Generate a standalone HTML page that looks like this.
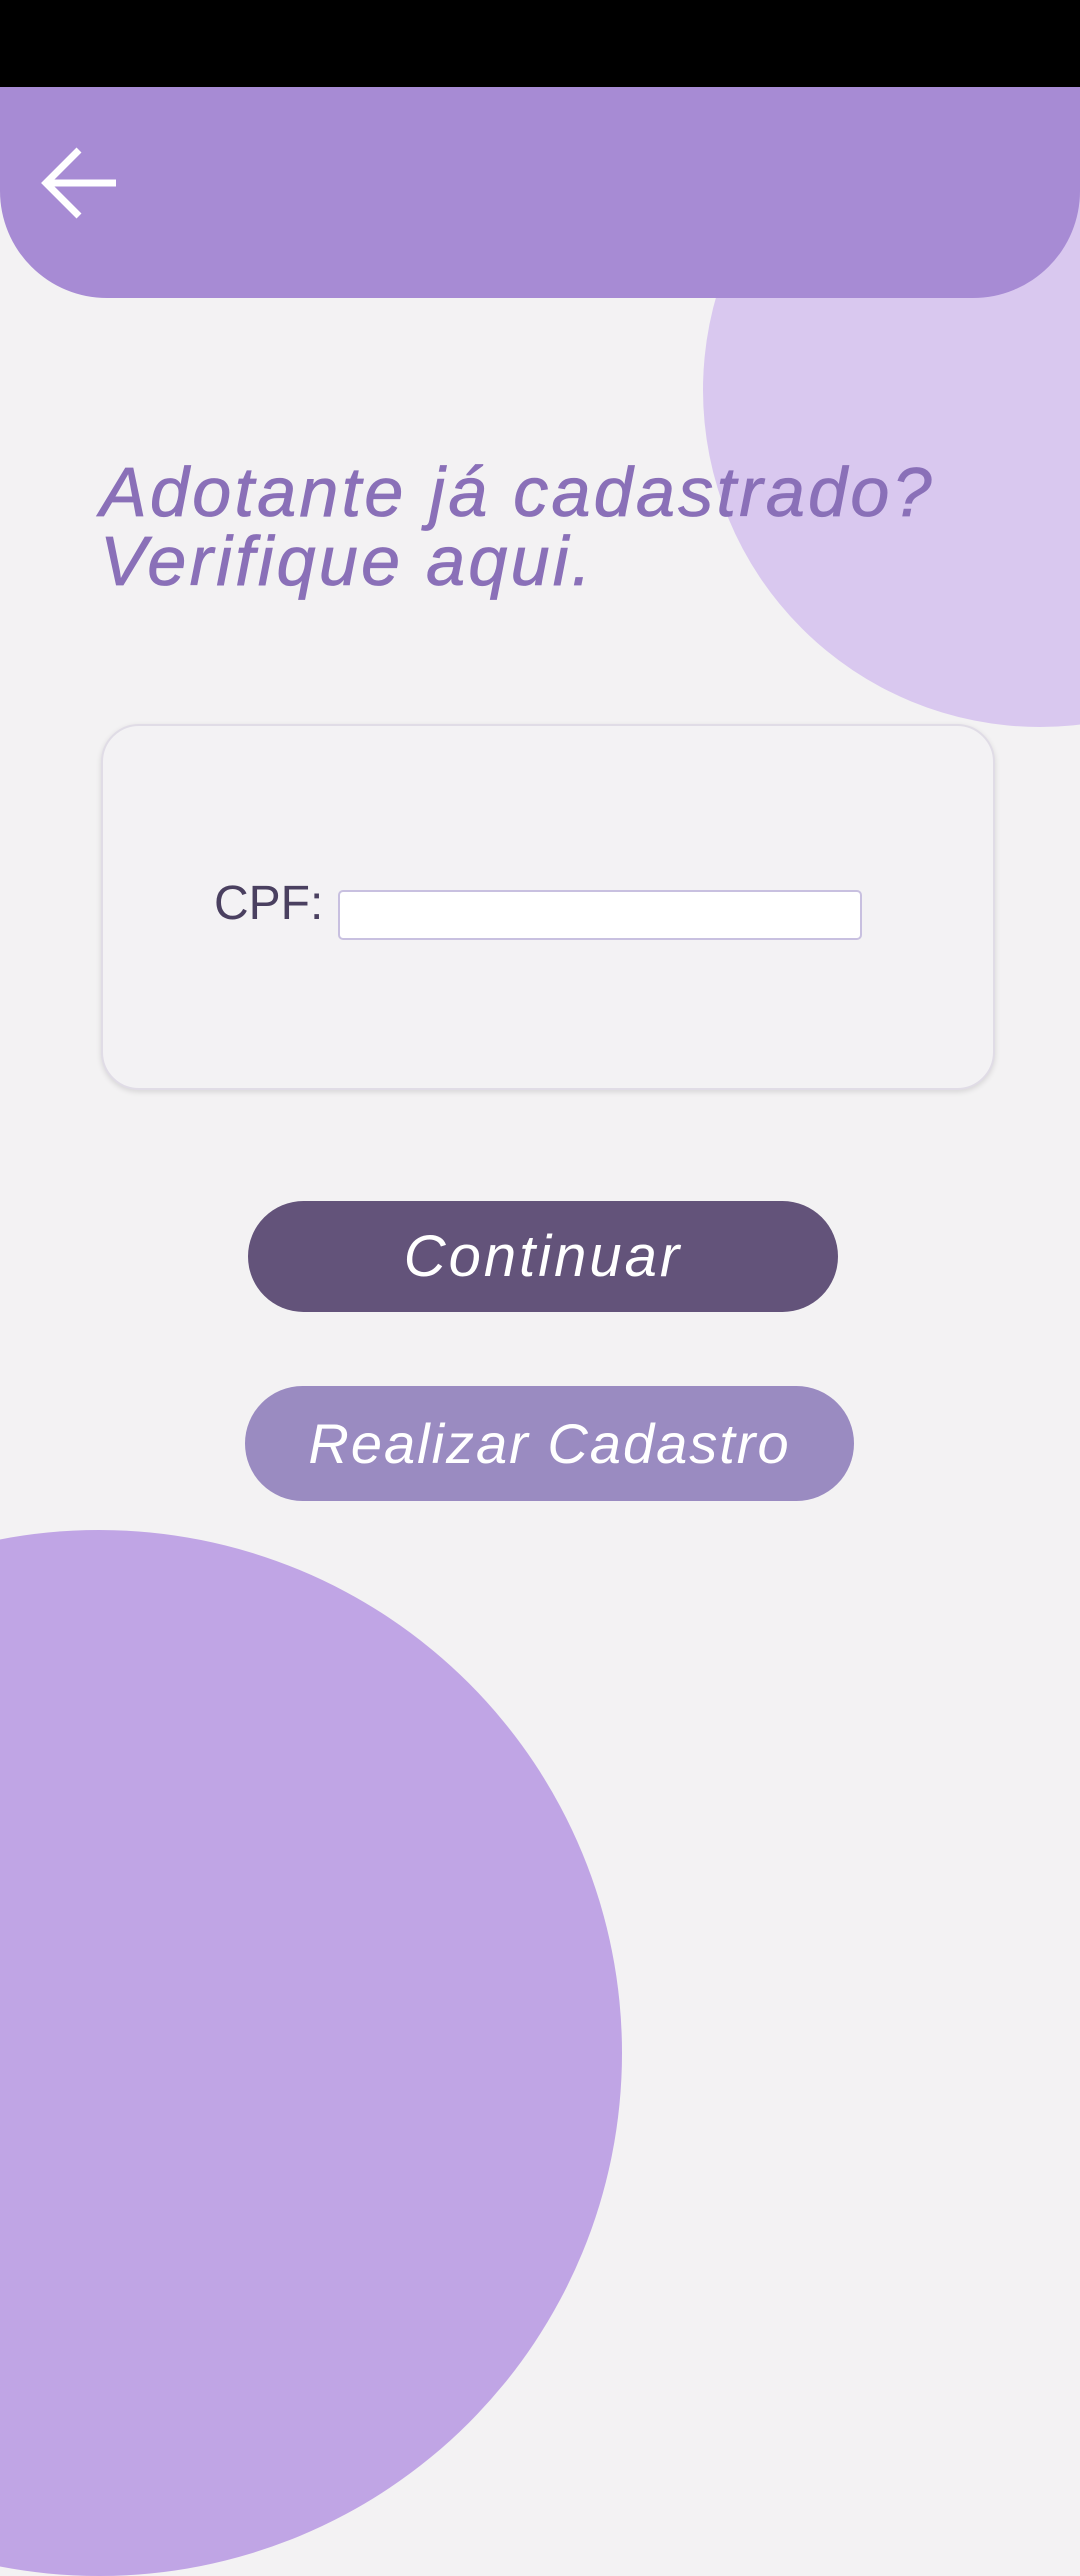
<!DOCTYPE html>
<html><head><meta charset="utf-8"><style>
html,body{margin:0;padding:0}
body{width:1080px;height:2400px;position:relative;overflow:hidden;background:#f3f2f3;font-family:"Liberation Sans",sans-serif}
.abs{position:absolute}
</style></head><body>
<div class="abs" style="left:703px;top:53px;width:674px;height:674px;border-radius:50%;background:#d9c8ef"></div>
<div class="abs" style="left:-424px;top:1530px;width:1046px;height:1046px;border-radius:50%;background:#c0a5e5"></div>
<div class="abs" style="left:0;top:0;width:1080px;height:87px;background:#000"></div>
<div class="abs" style="left:0;top:87px;width:1080px;height:211px;background:#a78bd4;border-radius:0 0 107px 107px"></div>
<svg class="abs" style="left:36px;top:140px" width="86" height="86" viewBox="0 0 86 86"><path d="M80 43H10M43 10L10 43L43 76" stroke="#fff" stroke-width="7" fill="none"/></svg>
<div class="abs" style="left:100px;top:458px;font-style:italic;font-size:70px;line-height:69px;color:#8a70b8;letter-spacing:3.3px;white-space:nowrap;-webkit-text-stroke:0.8px #8a70b8">Adotante já cadastrado?<br>Verifique aqui.</div>
<div class="abs" style="left:101px;top:724px;width:890px;height:362px;border-radius:38px;background:#f3f2f4;border:2px solid #e0dce6;box-shadow:0 2px 6px rgba(0,0,0,.12)"></div>
<div class="abs" style="left:214px;top:876px;font-size:48px;color:#4a4060">CPF:</div>
<div class="abs" style="left:338px;top:890px;width:520px;height:46px;background:#fff;border:2px solid #c8c0e0;border-radius:5px"></div>
<div class="abs" style="left:248px;top:1201px;width:590px;height:111px;border-radius:56px;background:#63537a;color:#fff;font-style:italic;font-size:58px;letter-spacing:3px;line-height:111px;text-align:center">Continuar</div>
<div class="abs" style="left:245px;top:1386px;width:609px;height:115px;border-radius:58px;background:#9a8bc1;color:#fff;font-style:italic;font-size:56px;letter-spacing:2px;line-height:115px;text-align:center">Realizar Cadastro</div>
</body></html>
